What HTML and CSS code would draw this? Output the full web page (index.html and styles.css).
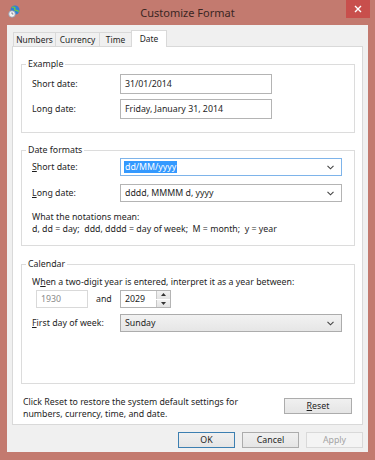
FILE: index.html
```html
<!DOCTYPE html>
<html lang="en">
<head>
    <meta charset="UTF-8">
    <meta name="viewport" content="width=device-width, initial-scale=1.0">
    <title>Customize Format</title>
    <link rel="stylesheet" href="styles.css">
</head>
<body>
    <div class="window">
        <div class="titlebar">
            <svg class="app-icon" width="12" height="13" viewBox="0 0 12 13">
                <circle cx="7" cy="5" r="4.5" fill="#2f7fd6"/>
                <path d="M4 2.5 Q6 1.5 7 3 Q6 5 8 5.5 Q10 5 10.5 7" fill="none" stroke="#6cc24a" stroke-width="1.4"/>
                <circle cx="4" cy="9" r="3.3" fill="#f4f4f4" stroke="#8c9bb0" stroke-width="0.8"/>
                <path d="M4 7.3 V9 H5.4" fill="none" stroke="#4a5b75" stroke-width="0.7"/>
            </svg>
            <div class="title">Customize Format</div>
            <div class="close">
                <svg width="8" height="8" viewBox="0 0 8 8">
                    <path d="M1 1 L7 7 M7 1 L1 7" stroke="#fff" stroke-width="1.4"/>
                </svg>
            </div>
        </div>

        <div class="client">
            <div class="tabs">
                <div class="tab tab-numbers">Numbers</div>
                <div class="tab tab-currency">Currency</div>
                <div class="tab tab-time">Time</div>
                <div class="tab tab-date active">Date</div>
            </div>

            <div class="panel">
                <fieldset class="group group-example">
                    <legend>Example</legend>
                    <div class="row">
                        <span class="label">Short date:</span>
                        <div class="field field-example">31/01/2014</div>
                    </div>
                    <div class="row">
                        <span class="label">Long date:</span>
                        <div class="field field-example">Friday, January 31, 2014</div>
                    </div>
                </fieldset>

                <fieldset class="group group-formats">
                    <legend>Date formats</legend>
                    <div class="row row-combo">
                        <span class="label"><u>S</u>hort date:</span>
                        <div class="combo focused">
                            <span class="selected-text">dd/MM/yyyy</span>
                            <svg class="chevron" width="7" height="5" viewBox="0 0 7 5"><path d="M0.5 0.8 L3.5 3.8 L6.5 0.8" fill="none" stroke="#444" stroke-width="1.1"/></svg>
                        </div>
                    </div>
                    <div class="row row-combo">
                        <span class="label"><u>L</u>ong date:</span>
                        <div class="combo">
                            <span>dddd, MMMM d, yyyy</span>
                            <svg class="chevron" width="7" height="5" viewBox="0 0 7 5"><path d="M0.5 0.8 L3.5 3.8 L6.5 0.8" fill="none" stroke="#444" stroke-width="1.1"/></svg>
                        </div>
                    </div>
                    <p class="notes">What the notations mean:<br>d, dd = day;&nbsp; ddd, dddd = day of week;&nbsp; M = month;&nbsp; y = year</p>
                </fieldset>

                <fieldset class="group group-calendar">
                    <legend>Calendar</legend>
                    <p class="cal-text">W<u>h</u>en a two-digit year is entered, interpret it as a year between:</p>
                    <div class="year-row">
                        <div class="field field-year disabled">1930</div>
                        <span class="and">and</span>
                        <div class="field field-year spin-field">
                            <span>2029</span>
                            <div class="spinner">
                                <div class="spin-btn"><svg width="5" height="3" viewBox="0 0 5 3"><path d="M0 3 L2.5 0 L5 3 Z" fill="#333"/></svg></div>
                                <div class="spin-btn"><svg width="5" height="3" viewBox="0 0 5 3"><path d="M0 0 L2.5 3 L5 0 Z" fill="#333"/></svg></div>
                            </div>
                        </div>
                    </div>
                    <div class="row row-week">
                        <span class="label"><u>F</u>irst day of week:</span>
                        <div class="combo dropdown">
                            <span>Sunday</span>
                            <svg class="chevron" width="7" height="5" viewBox="0 0 7 5"><path d="M0.5 0.8 L3.5 3.8 L6.5 0.8" fill="none" stroke="#444" stroke-width="1.1"/></svg>
                        </div>
                    </div>
                </fieldset>

                <div class="reset-row">
                    <p>Click Reset to restore the system default settings for<br>numbers, currency, time, and date.</p>
                    <button class="btn btn-reset"><u>R</u>eset</button>
                </div>
            </div>

            <div class="actions">
                <button class="btn btn-default">OK</button>
                <button class="btn">Cancel</button>
                <button class="btn btn-disabled">Apply</button>
            </div>
        </div>
    </div>
</body>
</html>
```

FILE: styles.css
```css
body {
    margin: 0;
    padding: 0;
    font-family: 'Noto Sans', 'Open Sans', sans-serif;
    font-size: 8.8px;
    color: #1e1e1e;
}

p {
    margin: 0;
}

.window {
    width: 375px;
    height: 460px;
    background: #c37a6f;
    display: flex;
    flex-direction: column;
}

/* title bar */

.titlebar {
    height: 25px;
    display: grid;
    grid-template-columns: 1fr auto 1fr;
    align-items: start;
}

.app-icon {
    margin: 5px 0 0 8px;
}

.title {
    font-size: 11px;
    line-height: 25px;
    color: #3b2623;
}

.close {
    justify-self: end;
    width: 24px;
    height: 18px;
    margin-right: 5px;
    background: #c84f4c;
    display: flex;
    align-items: center;
    justify-content: center;
}

/* client area */

.client {
    flex: 1;
    margin: 0 7px 8px 7px;
    background: #f0f0f0;
    padding: 5px 5px 0 5px;
    display: flex;
    flex-direction: column;
}

.tabs {
    height: 16px;
    display: flex;
    align-items: flex-end;
    padding-left: 1px;
}

.tab {
    height: 14px;
    box-sizing: border-box;
    border: 1px solid #d9d9d9;
    border-bottom: none;
    margin-right: -1px;
    background: #f0f0f0;
    font-size: 8.4px;
    line-height: 13px;
    text-align: center;
}

.tab-numbers { width: 43px; }
.tab-currency { width: 45px; }
.tab-time { width: 33px; }
.tab-date { width: 36px; }

.tab.active {
    height: 17px;
    margin-bottom: -1px;
    background: #fff;
    position: relative;
    z-index: 1;
    line-height: 15px;
}

.panel {
    background: #fff;
    border: 1px solid #d9d9d9;
    padding: 11px 0 4px 0;
}

/* group boxes */

.group {
    margin: 0 7px 0 8px;
    padding: 0 10px;
    border: 1px solid #dcdcdc;
    min-inline-size: 0;
}

.group legend {
    padding: 0 2px;
    margin-left: -6px;
    line-height: 12px;
}

.group-example {
    padding-top: 4px;
    padding-bottom: 13px;
}

.group-formats {
    margin-top: 11px;
    padding-top: 2px;
    padding-bottom: 10px;
}

.group-calendar {
    margin-top: 12px;
    padding-top: 6px;
    padding-bottom: 51px;
}

.row {
    display: flex;
    align-items: center;
}

.row + .row {
    margin-top: 5px;
}

.row-combo + .row-combo {
    margin-top: 8px;
}

.label {
    width: 88px;
}

.field {
    height: 20px;
    box-sizing: border-box;
    border: 1px solid #b4b4b4;
    background: #fff;
    padding-left: 4px;
    display: flex;
    align-items: center;
}

.field-example {
    width: 152px;
}

.combo {
    width: 222px;
    height: 18px;
    box-sizing: border-box;
    border: 1px solid #b4b4b4;
    background: #fff;
    padding: 0 7px 0 4px;
    display: flex;
    align-items: center;
    justify-content: space-between;
}

.combo.focused {
    border-color: #7eb4ea;
}

.combo.dropdown {
    background: linear-gradient(#f2f2f2, #e6e6e6);
    border-color: #acacac;
}

.selected-text {
    background: #3399ff;
    color: #fff;
    line-height: 12px;
    padding: 0 1px;
    margin-left: -1px;
}

.notes {
    margin-top: 9px;
    line-height: 12px;
}

.cal-text {
    line-height: 12px;
}

.year-row {
    display: flex;
    align-items: center;
    margin-top: 2px;
}

.field-year {
    width: 52px;
    height: 18px;
}

.field-year.disabled {
    margin-left: 4px;
    border-color: #d9d9d9;
    color: #8a8a8a;
}

.and {
    width: 32px;
    box-sizing: border-box;
    padding-left: 8px;
}

.spin-field {
    width: 51px;
    padding-right: 0;
    justify-content: space-between;
}

.spinner {
    width: 14px;
    height: 16px;
    display: flex;
    flex-direction: column;
    gap: 1px;
}

.spin-btn {
    flex: 1;
    background: linear-gradient(#f2f2f2, #e3e3e3);
    border-left: 1px solid #c8c8c8;
    display: flex;
    align-items: center;
    justify-content: center;
}

.row-week {
    margin-top: 6px;
}

/* reset area */

.reset-row {
    margin-top: 12px;
    padding: 0 10px;
    display: flex;
    justify-content: space-between;
    align-items: flex-start;
    line-height: 12px;
}

.btn {
    font-family: inherit;
    font-size: 8.8px;
    color: #1e1e1e;
    height: 16px;
    width: 57px;
    padding: 0;
    border: 1px solid #acacac;
    background: linear-gradient(#f0f0f0, #e5e5e5);
    border-radius: 0;
}

.btn-reset {
    width: 68px;
    margin-top: 2px;
}

.actions {
    display: flex;
    justify-content: flex-end;
    gap: 7px;
    margin-top: 7px;
}

.btn-default {
    border-color: #3c7fb1;
}

.btn-disabled {
    border-color: #d9d9d9;
    background: #f4f4f4;
    color: #a3a3a3;
}
```
